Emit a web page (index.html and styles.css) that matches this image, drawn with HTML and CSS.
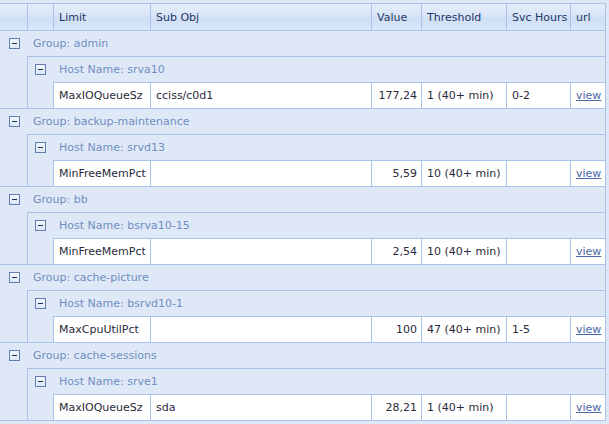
FILE: index.html
```html
<!DOCTYPE html>
<html lang="en">
<head>
  <meta charset="UTF-8">
  <title>Alerts</title>
  <link rel="stylesheet" href="styles.css">
</head>
<body>
  <div class="grid">
    <div class="grid-head">
      <div class="hd"></div>
      <div class="hd"></div>
      <div class="hd">Limit</div>
      <div class="hd">Sub Obj</div>
      <div class="hd">Value</div>
      <div class="hd">Threshold</div>
      <div class="hd">Svc Hours</div>
      <div class="hd">url</div>
    </div>

    <div class="group">
      <div class="group-title"><span class="toggle"></span>Group: admin</div>
      <div class="host">
        <div class="host-title"><span class="toggle"></span>Host Name: srva10</div>
        <div class="row">
          <div class="cell">MaxIOQueueSz</div>
          <div class="cell">cciss/c0d1</div>
          <div class="cell num">177,24</div>
          <div class="cell">1 (40+ min)</div>
          <div class="cell">0-2</div>
          <div class="cell"><a href="#">view</a></div>
        </div>
      </div>
    </div>

    <div class="group">
      <div class="group-title"><span class="toggle"></span>Group: backup-maintenance</div>
      <div class="host">
        <div class="host-title"><span class="toggle"></span>Host Name: srvd13</div>
        <div class="row">
          <div class="cell">MinFreeMemPct</div>
          <div class="cell"></div>
          <div class="cell num">5,59</div>
          <div class="cell">10 (40+ min)</div>
          <div class="cell"></div>
          <div class="cell"><a href="#">view</a></div>
        </div>
      </div>
    </div>

    <div class="group">
      <div class="group-title"><span class="toggle"></span>Group: bb</div>
      <div class="host">
        <div class="host-title"><span class="toggle"></span>Host Name: bsrva10-15</div>
        <div class="row">
          <div class="cell">MinFreeMemPct</div>
          <div class="cell"></div>
          <div class="cell num">2,54</div>
          <div class="cell">10 (40+ min)</div>
          <div class="cell"></div>
          <div class="cell"><a href="#">view</a></div>
        </div>
      </div>
    </div>

    <div class="group">
      <div class="group-title"><span class="toggle"></span>Group: cache-picture</div>
      <div class="host">
        <div class="host-title"><span class="toggle"></span>Host Name: bsrvd10-1</div>
        <div class="row">
          <div class="cell">MaxCpuUtilPct</div>
          <div class="cell"></div>
          <div class="cell num">100</div>
          <div class="cell">47 (40+ min)</div>
          <div class="cell">1-5</div>
          <div class="cell"><a href="#">view</a></div>
        </div>
      </div>
    </div>

    <div class="group">
      <div class="group-title"><span class="toggle"></span>Group: cache-sessions</div>
      <div class="host">
        <div class="host-title"><span class="toggle"></span>Host Name: srve1</div>
        <div class="row">
          <div class="cell">MaxIOQueueSz</div>
          <div class="cell">sda</div>
          <div class="cell num">28,21</div>
          <div class="cell">1 (40+ min)</div>
          <div class="cell"></div>
          <div class="cell"><a href="#">view</a></div>
        </div>
      </div>
    </div>
  </div>
</body>
</html>
```

FILE: styles.css
```css
/* base */
* {
  margin: 0;
  padding: 0;
  box-sizing: border-box;
}

body {
  background-color: #dfe8f6;
  font-family: 'DejaVu Sans', Verdana, sans-serif;
  font-size: 11px;
  color: #222;
}

/* grid */
.grid {
  width: 606px;
  margin-top: 3px;
  border-right: 1px solid #a9c4ea;
}

.grid-head {
  display: grid;
  grid-template-columns: 27px 26px 97px 221px 50px 85px 64px 35px;
  height: 28px;
  border-top: 1px solid #a9c4ea;
  border-bottom: 1px solid #a9c4ea;
  background: linear-gradient(#e6eefa, #d8e5f7 45%, #cfdff4 55%, #dae6f7);
}

.hd {
  display: flex;
  align-items: center;
  padding-left: 5px;
  border-left: 1px solid #a9c4ea;
  color: #1e3766;
  white-space: nowrap;
}

.hd:first-child {
  border-left: none;
}

/* group rows */
.group {
  border-bottom: 1px solid #a9c4ea;
}

.group-title,
.host-title {
  display: flex;
  align-items: center;
  height: 25px;
  color: #6f8fc2;
}

.group-title .toggle {
  margin-left: 9px;
  margin-right: 13px;
}

.host {
  margin-left: 27px;
  border-left: 1px solid #a9c4ea;
  border-top: 1px solid #a9c4ea;
}

.host-title .toggle {
  margin-left: 7px;
  margin-right: 13px;
}

.toggle {
  position: relative;
  width: 11px;
  height: 11px;
  border: 1px solid #5f7fb2;
  background: linear-gradient(#f2f6fc, #dde8f7);
}

.toggle::after {
  content: '';
  position: absolute;
  left: 2px;
  top: 4px;
  width: 5px;
  height: 1px;
  background-color: #1c2e52;
}

/* data rows */
.row {
  display: grid;
  grid-template-columns: 97px 221px 50px 85px 64px 35px;
  height: 26px;
  margin-left: 25px;
  border-top: 1px solid #a9c4ea;
  background-color: #fff;
}

.cell {
  display: flex;
  align-items: center;
  padding-left: 5px;
  border-left: 1px solid #a9c4ea;
  white-space: nowrap;
  color: #2a2a3a;
}

.cell.num {
  justify-content: flex-end;
  padding-right: 4px;
}

.cell a {
  color: #4a68a6;
}
```
